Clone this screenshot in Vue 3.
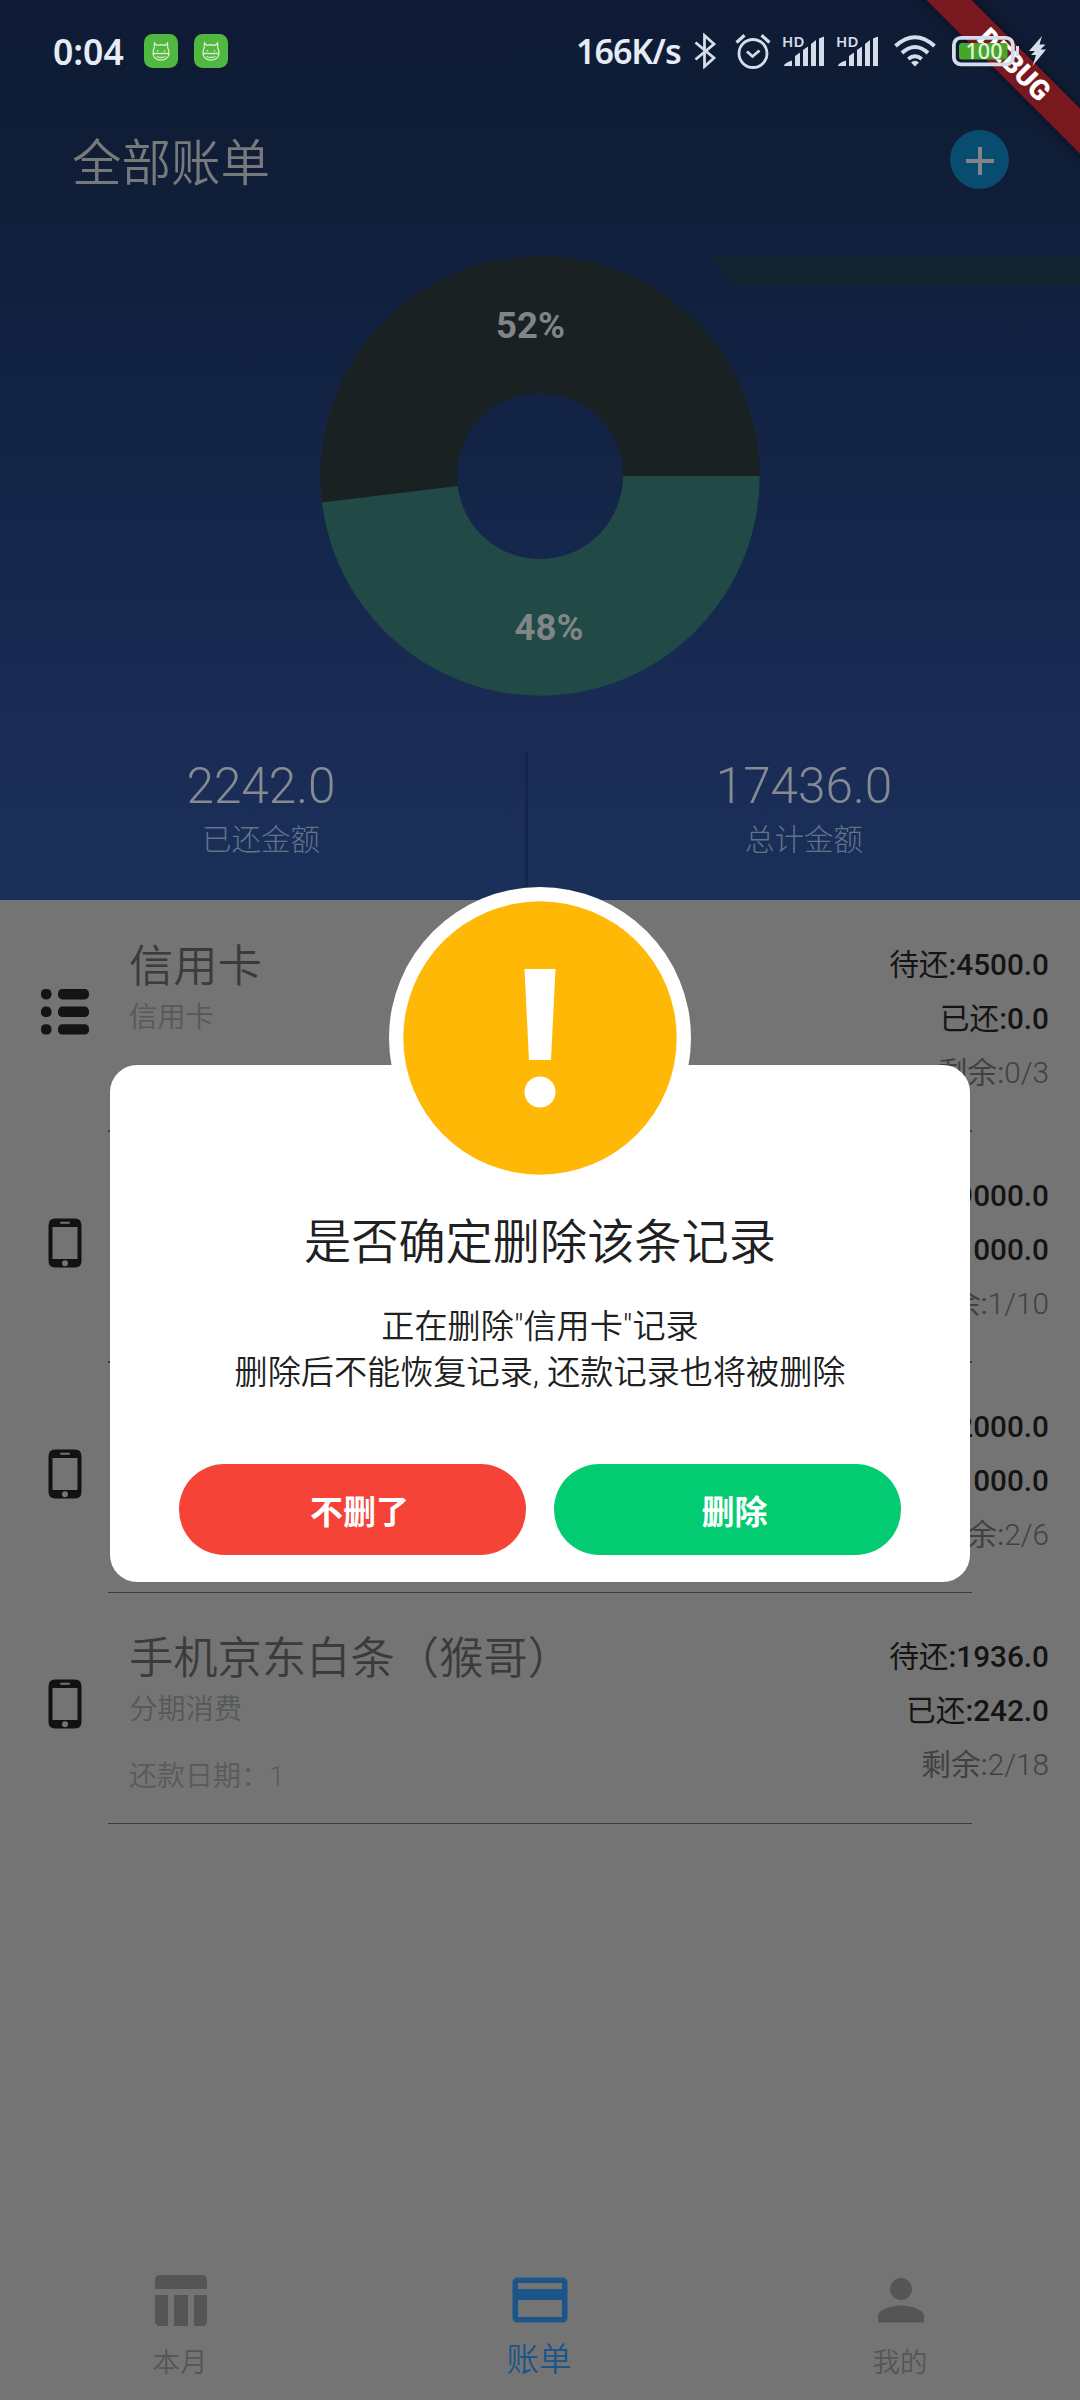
<script setup>
const bills = [
  { icon: 'list', title: '信用卡', kind: '信用卡', date: '', due: '4500.0', paid: '0.0', left: '0/3' },
  { icon: 'phone', title: '', kind: '', date: '', due: '9000.0', paid: '1000.0', left: '1/10' },
  { icon: 'phone', title: '', kind: '', date: '', due: '2000.0', paid: '1000.0', left: '2/6' },
  { icon: 'phone', title: '手机京东白条（猴哥）', kind: '分期消费', date: '还款日期：1', due: '1936.0', paid: '242.0', left: '2/18' },
]
const stats = [
  { value: '2242.0', label: '已还金额' },
  { value: '17436.0', label: '总计金额' },
]
</script>

<template>
  <div class="screen">
    <header class="header">
      <svg class="streak" width="370" height="29" viewBox="0 0 370 29"><path d="M0 0H370V29H24Z" fill="#11242f" /></svg>
      <div class="titlebar">
        <h1>全部账单</h1>
        <div class="add">
          <svg width="28" height="28" viewBox="0 0 28 28"><path d="M14 0V28M0 14H28" stroke="#838489" stroke-width="4" /></svg>
        </div>
      </div>
      <svg class="chart" width="440" height="440" viewBox="-220 -220 440 440">
        <path d="M219.7 0A219.7 219.7 0 1 0 -218.1 26.4L-82.4 10A83 83 0 1 1 83 0Z" fill="#1a2122" />
        <path d="M219.7 0A219.7 219.7 0 0 1 -218.1 26.4L-82.4 10A83 83 0 0 0 83 0Z" fill="#214a46" />
        <text x="-9.5" y="-138" class="pct">52%</text>
        <text x="9" y="164" class="pct">48%</text>
      </svg>
      <div class="stats">
        <div v-for="s in stats" :key="s.label" class="stat">
          <div class="value">{{ s.value }}</div>
          <div class="label">{{ s.label }}</div>
        </div>
      </div>
    </header>

    <main class="list">
      <section v-for="(b, i) in bills" :key="i" class="row">
        <div class="icon">
          <svg v-if="b.icon === 'list'" width="48" height="46" viewBox="0 0 48 46" fill="#151314">
            <g v-for="n in 3" :key="n">
              <rect x="0" :y="(n - 1) * 17.6" width="10.5" height="10.4" rx="4.6" />
              <rect x="17" :y="(n - 1) * 17.6" width="31" height="10.4" rx="4.4" />
            </g>
          </svg>
          <svg v-else width="34" height="50" viewBox="0 0 34 50">
            <path fill="#121212" fill-rule="evenodd" d="M7 .5H27Q33.500 .5 33.500 7.500V42.500Q33.500 49.500 27 49.500H7Q.5 49.500 .5 42.500V7.500Q.5 .5 7 .5ZM4.500 9V41H29.500V9ZM13 3.700Q12 3.700 12 4.700T13 5.700H21Q22 5.700 22 4.700T21 3.700ZM17 42.200A3 3 0 1 0 17 48.200A3 3 0 1 0 17 42.200Z" />
          </svg>
        </div>
        <div class="info">
          <div class="name">{{ b.title }}</div>
          <div class="kind">{{ b.kind }}</div>
          <div class="date">{{ b.date }}</div>
        </div>
        <div class="amounts">
          <div>待还<b>:{{ b.due }}</b></div>
          <div>已还<b>:{{ b.paid }}</b></div>
          <div class="left">剩余:<i>{{ b.left }}</i></div>
        </div>
      </section>
    </main>

    <nav class="tabs">
      <div class="tab">
        <svg width="54" height="56" viewBox="0 0 54 56" fill="#545656">
          <path d="M6 3H48Q53 3 53 8V17H1V8Q1 3 6 3ZM1 23H14V54H6Q1 54 1 49ZM20 23H34V54H20ZM40 23H53V49Q53 54 48 54H40Z" />
        </svg>
        <span>本月</span>
      </div>
      <div class="tab active">
        <svg width="56" height="56" viewBox="0 0 56 56">
          <path fill="#1b558a" fill-rule="evenodd" d="M6 5.500H50Q55.500 5.500 55.500 11V45Q55.500 50.500 50 50.500H6Q.5 50.500 .5 45V11Q.5 5.500 6 5.500ZM6 11V17H50V11ZM6 28V45H50V28Z" />
        </svg>
        <span>账单</span>
      </div>
      <div class="tab">
        <svg width="56" height="56" viewBox="0 0 56 56" fill="#545656">
          <circle cx="28" cy="17" r="11" />
          <path d="M5 50.500V44.500C5 37 20 33.500 28 33.500S51 37 51 44.500V50.500Z" />
        </svg>
        <span>我的</span>
      </div>
    </nav>

    <div class="ribbon"><span>DEBUG</span></div>

    <div class="statusbar">
      <span class="clock">0:04</span>
      <svg v-for="n in 2" :key="n" class="app" width="34" height="34" viewBox="0 0 34 34">
        <rect width="34" height="34" rx="8.500" fill="#50b840" />
        <path d="M10.500 9L13 11.500Q17 10 21 11.500L23.500 9L23.800 14Q25 16.500 25 19C25 23.500 21.500 26.200 17 26.200S9 23.500 9 19Q9 16.500 10.200 14ZM9 19.500H25M13.500 16V17.500M20.500 16V17.500M12.500 22.500Q17 24.500 21.500 22.500" fill="none" stroke="#d5f0c8" stroke-width="1.300" />
      </svg>
      <span class="speed">166K/s</span>
      <svg class="bt" width="22" height="36" viewBox="0 0 22 36"><path d="M1.500 9.500L20 25L10.500 33.500V2.500L20 11L1.500 26.500" fill="none" stroke="#d5dcea" stroke-width="2.800" /></svg>
      <svg class="alarm" width="36" height="36" viewBox="0 0 36 36" fill="none" stroke="#d5dcea" stroke-width="2.800">
        <circle cx="18" cy="20.500" r="14" /><path d="M12 18.500L17.500 23.500L24.500 17.500" stroke-width="2.800" /><path d="M1.500 9.500L9.500 2.200M34.500 9.500L26.500 2.200" stroke-width="3.200" />
      </svg>
      <svg v-for="n in 2" :key="'s' + n" class="signal" width="44" height="38" viewBox="0 -4 44 38">
        <text x="0" y="12.500" font-size="15" font-weight="600" textLength="22.500" fill="#d5dcea">HD</text>
        <path d="M2 32Q2 29 10 26.500V32ZM13 22L18 18.500V32H13ZM21 16L26 12.500V32H21ZM29 10L34 6V32H29ZM37 4.500L42 2.500V32H37Z" fill="#d5dcea" />
      </svg>
      <svg class="wifi" width="42" height="32" viewBox="0 0 42 32" fill="none" stroke="#d5dcea" stroke-width="4">
        <path d="M1.500 11Q21 -6.500 40.500 11M8 18Q21 6 34 18M14.300 24Q21 18.500 27.700 24" /><path d="M21 31.500L17 27.500Q21 24 25 27.500Z" fill="#d5dcea" stroke="none" />
      </svg>
      <svg class="battery" width="68" height="32" viewBox="0 0 68 32">
        <rect x="1.900" y="2.900" width="59" height="26.500" rx="7" fill="none" stroke="#d5dcea" stroke-width="3.800" />
        <rect x="7" y="8" width="48.500" height="16.500" rx="3" fill="#45a62a" />
        <path d="M65.500 11V21" stroke="#d5dcea" stroke-width="3" />
        <text x="32" y="24" text-anchor="middle" font-size="22.500" font-weight="500" fill="#e6f5df" textLength="37" lengthAdjust="spacingAndGlyphs">100</text>
      </svg>
      <svg class="bolt" width="18" height="32" viewBox="0 0 18 32"><path d="M13 1L0 16H6L2 20H7L3.500 31L17 14.500H11.500L16.500 9.500H10.500Z" fill="#d5dcea" /></svg>
    </div>

    <div class="dialog">
      <svg class="warn" width="302" height="302" viewBox="-151 -151 302 302">
        <circle r="151" fill="#fff" /><circle r="136.700" fill="#ffb806" />
        <path d="M-15.500 -69H15.500L11 22H-11Z" fill="#fff" /><circle cy="54" r="15.500" fill="#fff" />
      </svg>
      <h2>是否确定删除该条记录</h2>
      <p>正在删除"信用卡"记录<br />删除后不能恢复记录, 还款记录也将被删除</p>
      <div class="actions">
        <button class="cancel">不删了</button>
        <button class="confirm">删除</button>
      </div>
    </div>
  </div>
</template>

<style>
body { margin: 0; background: #747474; }
</style>

<style scoped>
* { box-sizing: border-box; }
h1, h2, p { margin: 0; font-weight: 400; }
.screen { position: relative; width: 1080px; height: 2400px; display: flex; flex-direction: column; overflow: hidden; background: #747474; font-family: Roboto, "Noto Sans CJK SC", sans-serif; }
.header { position: relative; height: 900px; padding-top: 132px; display: flex; flex-direction: column; background: linear-gradient(#0f1b35 0, #0f1d37 150px, #11203f 290px, #14264a 520px, #1a2b55 720px, #1a3058 900px); }
.streak { position: absolute; right: 0; top: 256px; }
.titlebar { height: 64px; padding: 0 71px 0 72px; display: flex; align-items: center; justify-content: space-between; }
h1 { font-size: 49.5px; line-height: 64px; color: #77797b; font-weight: 350; }
.add { width: 59px; height: 59px; border-radius: 50%; background: #084c70; display: flex; align-items: center; justify-content: center; margin-top: -10px; }
.add svg { margin-top: 3px; }
.chart { margin: 60px 0 0 320px; flex: none; }
.pct { font-size: 36.5px; font-weight: 700; fill: #808588; text-anchor: middle; }
.stats { margin-top: 57px; height: 147px; display: flex; }
.stat { flex: 0 0 552px; text-align: center; padding-top: 4px; color: #858a93; }
.stat:first-child { flex-basis: 528px; padding-right: 3px; border-right: 3px solid #14254b; }
.value { font-size: 49.5px; line-height: 58px; font-weight: 300; }
.label { font-size: 29.5px; line-height: 40px; margin-top: 5px; font-weight: 300; color: #60748a; }
.list { flex: 1; }
.row { position: relative; height: 230.800px; display: flex; padding: 34px 31px 0 0; }
.row::after { content: ""; position: absolute; left: 108px; right: 108px; bottom: -1px; height: 1.500px; background: #3b3d3d; }
.icon { width: 129px; height: 156px; display: flex; align-items: center; justify-content: center; }
.info { flex: 1; }
.name { font-size: 44.300px; line-height: 66px; height: 64px; font-weight: 350; color: #3a3b3b; white-space: nowrap; }
.kind { font-size: 28.300px; line-height: 40px; height: 40px; font-weight: 350; color: #565959; }
.date { font-size: 28px; line-height: 40px; margin-top: 27px; font-weight: 350; color: #595b5b; }
.amounts { text-align: right; font-size: 29.700px; line-height: 54px; color: #141414; padding-top: 4px; }
.amounts b { font-weight: 500; }
.left { color: #404242; }
.left i { font-style: normal; font-weight: 300; }
.tabs { height: 140px; padding: 12px 0 0; display: flex; }
.tab { flex: 1; display: flex; flex-direction: column; align-items: center; font-size: 27.500px; color: #545656; }
.tab svg { position: relative; left: 1px; }
.tab span { line-height: 44px; margin-top: 13px; font-weight: 350; }
.tab.active { font-size: 32.500px; color: #1b558a; }
.tab.active svg { left: 0; }
.tab.active span { margin-top: 10px; font-weight: 350; margin-right: 2px; }
.ribbon { position: absolute; left: 848.500px; top: 48.500px; width: 330px; height: 31.500px; display: flex; align-items: center; justify-content: center; background: #7a181f; transform: rotate(45deg); box-shadow: 0 0 10px rgba(0, 0, 0, .55); color: #fff; font-size: 28px; font-weight: 900; line-height: 31px; }
.statusbar { position: absolute; left: 0; top: 0; width: 1080px; height: 102px; display: flex; align-items: center; font-family: "Noto Sans", sans-serif; color: #e6ecf5; }
.statusbar svg { flex: none; }
.clock { width: 91px; margin-left: 53px; font-size: 35.500px; font-weight: 600; white-space: nowrap; }
.app { margin-right: 16px; }
.speed { width: 106px; margin-left: 332px; font-size: 34px; font-weight: 600; letter-spacing: -1px; white-space: nowrap; }
.bt { margin-left: 12px; }
.alarm { margin-left: 19px; }
.signal { margin-left: 11px; margin-top: -4px; }
.signal + .signal { margin-left: 10px; }
.wifi { margin-left: 14px; }
.battery { margin-left: 16px; }
.bolt { margin-left: 9px; }
.dialog { position: absolute; left: 110px; top: 1064.500px; width: 860px; height: 517px; border-radius: 27px; background: #fff; display: flex; flex-direction: column; align-items: center; color: #202020; text-align: center; }
.warn { flex: none; margin-top: -178px; }
h2 { font-size: 47.200px; line-height: 64px; margin-top: 22px; font-weight: 350; }
p { font-size: 33.150px; line-height: 46.500px; margin-top: 29px; font-weight: 350; }
.actions { display: flex; gap: 28px; margin-top: 67.500px; }
button { width: 347px; height: 91px; border: 0; border-radius: 46px; padding: 6px 0 0 14px; font: 700 33px/1 Roboto, "Noto Sans CJK SC", sans-serif; color: #fff; }
.cancel { background: #f54337; }
.confirm { background: #02cb72; }
</style>
